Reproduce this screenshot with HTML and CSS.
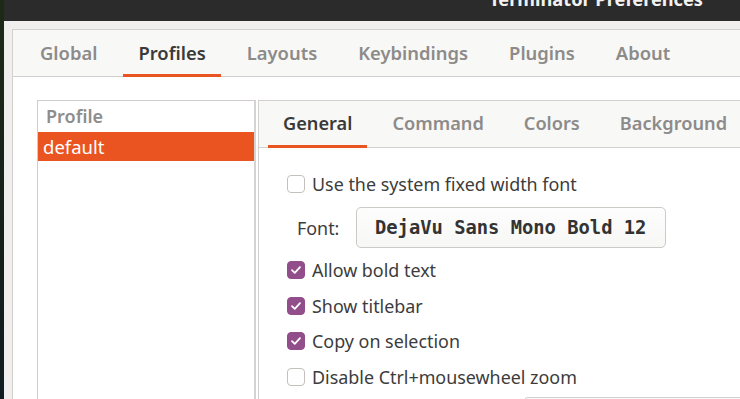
FILE: index.html
```html
<!DOCTYPE html>
<html>
<head>
<meta charset="utf-8">
<link rel="stylesheet" href="styles.css">
</head>
<body>
<div class="desktop">
  <div class="window">
    <div class="titlebar"><span class="title">Terminator Preferences</span></div>
    <div class="win-body">
      <div class="notebook outer">
        <div class="tabs outer-tabs">
          <div class="tab">Global</div>
          <div class="tab active">Profiles</div>
          <div class="tab">Layouts</div>
          <div class="tab">Keybindings</div>
          <div class="tab">Plugins</div>
          <div class="tab">About</div>
        </div>
        <div class="page">
          <div class="profile-list">
            <div class="list-header">Profile</div>
            <div class="list-row selected">default</div>
          </div>
          <div class="notebook inner">
            <div class="tabs inner-tabs">
              <div class="tab active">General</div>
              <div class="tab">Command</div>
              <div class="tab">Colors</div>
              <div class="tab">Background</div>
            </div>
            <div class="inner-page">
              <div class="check-row">
                <span class="check"></span>
                <span class="label">Use the system fixed width font</span>
              </div>
              <div class="font-row">
                <span class="font-label">Font:</span>
                <div class="font-button">DejaVu Sans Mono Bold 12</div>
              </div>
              <div class="check-row first-after-font">
                <span class="check checked"><svg viewBox="0 0 18 18" width="18" height="18"><polyline points="4.5,9.2 7.6,12.2 13.5,5.8" fill="none" stroke="#fff" stroke-width="2" stroke-linecap="round" stroke-linejoin="round"/></svg></span>
                <span class="label">Allow bold text</span>
              </div>
              <div class="check-row">
                <span class="check checked"><svg viewBox="0 0 18 18" width="18" height="18"><polyline points="4.5,9.2 7.6,12.2 13.5,5.8" fill="none" stroke="#fff" stroke-width="2" stroke-linecap="round" stroke-linejoin="round"/></svg></span>
                <span class="label">Show titlebar</span>
              </div>
              <div class="check-row">
                <span class="check checked"><svg viewBox="0 0 18 18" width="18" height="18"><polyline points="4.5,9.2 7.6,12.2 13.5,5.8" fill="none" stroke="#fff" stroke-width="2" stroke-linecap="round" stroke-linejoin="round"/></svg></span>
                <span class="label">Copy on selection</span>
              </div>
              <div class="check-row">
                <span class="check"></span>
                <span class="label">Disable Ctrl+mousewheel zoom</span>
              </div>
              <div class="next-field"></div>
            </div>
          </div>
        </div>
      </div>
    </div>
  </div>
</div>
</body>
</html>
```

FILE: styles.css
```css
html, body {
  margin: 0;
  padding: 0;
}
body {
  width: 740px;
  height: 399px;
  overflow: hidden;
  background: linear-gradient(180deg, #1d2a17 0%, #15201a 60%, #0f1c22 100%);
  font-family: "Noto Sans", "DejaVu Sans", sans-serif;
}
.desktop {
  display: flex;
  padding-left: 4px;
  height: 399px;
}
.window {
  width: 736px;
  height: 399px;
  display: flex;
  flex-direction: column;
  overflow: hidden;
}
.titlebar {
  height: 21px;
  flex: 0 0 21px;
  background: #2c2b2b;
  display: flex;
  justify-content: flex-end;
  padding-right: 37px;
  overflow: hidden;
}
.title {
  color: #f2f2f2;
  font-weight: 700;
  font-size: 18.2px;
  line-height: 18px;
  margin-top: -10px;
  white-space: nowrap;
}
.win-body {
  flex: 1;
  background: #f0efee;
  padding: 8px 0 0 8px;
  overflow: hidden;
}
.notebook {
  border: 1px solid #d3d0cd;
  background: #ffffff;
  display: flex;
  flex-direction: column;
}
.outer {
  width: 760px;
  height: 420px;
}
.tabs {
  display: flex;
  align-items: stretch;
  background: #f8f8f7;
  border-bottom: 1px solid #d3d0cd;
  flex: 0 0 auto;
}
.outer-tabs {
  height: 46px;
  padding-left: 12px;
  gap: 11px;
}
.inner-tabs {
  height: 46px;
  padding-left: 9px;
  gap: 10px;
}
.tab {
  display: flex;
  align-items: center;
  padding: 0 15px;
  font-size: 18.4px;
  font-weight: 600;
  color: #8d8b89;
  border-bottom: 3px solid transparent;
  margin-bottom: -1px;
  padding-top: 0;
  white-space: nowrap;
}
.inner-tabs .tab {
  font-size: 18.2px;
}
.tab.active {
  color: #3a3a3a;
  border-bottom-color: #e95420;
}
.page {
  flex: 1;
  display: flex;
  padding: 23px 0 0 24px;
  gap: 2px;
}
.profile-list {
  width: 219px;
  box-sizing: border-box;
  border: 1px solid #cfcccb;
  border-right: 2px solid #d6d3d1;
  background: #fff;
  flex: 0 0 auto;
}
.list-header {
  height: 31px;
  display: flex;
  align-items: center;
  padding-left: 8px;
  padding-bottom: 1px;
  box-sizing: border-box;
  font-size: 18px;
  font-weight: 600;
  color: #8f8d8b;
}
.list-row {
  height: 29px;
  display: flex;
  align-items: center;
  padding-left: 5px;
  font-size: 18.5px;
  color: #fff;
}
.list-row.selected {
  background: #e95420;
}
.inner {
  flex: 1;
  border-right: none;
  border-bottom: none;
}
.inner-page {
  padding: 27px 0 0 28px;
  display: flex;
  flex-direction: column;
  color: #3c3c3c;
  font-size: 17.9px;
}
.check-row {
  display: flex;
  align-items: center;
  height: 18px;
  gap: 7px;
  margin-top: 17.5px;
}
.check-row:first-child {
  margin-top: 0;
}
.check-row.first-after-font {
  margin-top: 13px;
}
.check {
  width: 18px;
  height: 18px;
  box-sizing: border-box;
  border: 1px solid #c4c0bc;
  border-radius: 4px;
  background: #fff;
  display: flex;
  align-items: center;
  justify-content: center;
  flex: 0 0 auto;
}
.check.checked {
  background: #924d8b;
  border-color: #924d8b;
}
.check svg {
  display: block;
}
.label {
  white-space: nowrap;
}
.font-row {
  display: flex;
  align-items: center;
  margin-top: 14px;
  padding-left: 10px;
  height: 41px;
}
.font-label {
  width: 59px;
  flex: 0 0 59px;
}
.font-button {
  width: 310px;
  height: 41px;
  box-sizing: border-box;
  border: 1px solid #cdc9c5;
  border-radius: 5px;
  background: linear-gradient(180deg, #fdfdfd, #f7f7f6);
  display: flex;
  align-items: center;
  padding-left: 18px;
  font-family: "DejaVu Sans Mono", monospace;
  font-weight: 700;
  font-size: 18.8px;
  color: #333333;
  white-space: nowrap;
}
.next-field {
  margin-top: 11px;
  margin-left: 236px;
  height: 30px;
  border: 1px solid #d3d0cd;
  border-radius: 5px;
  background: #fafafa;
}
```
